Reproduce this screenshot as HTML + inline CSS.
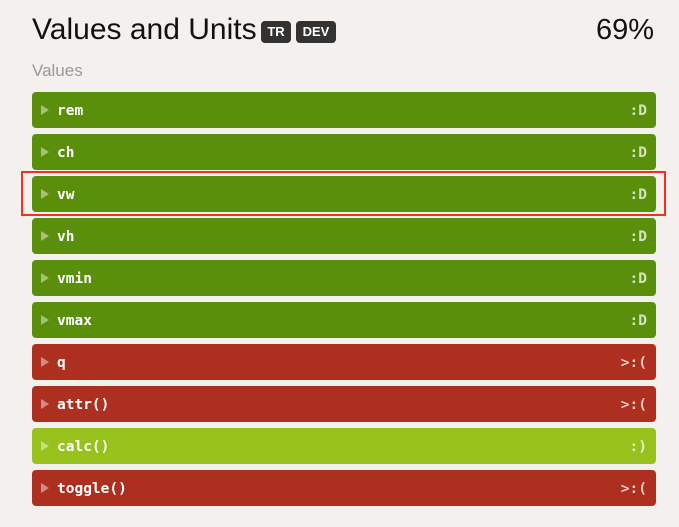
<!DOCTYPE html>
<html><head><style>
body{margin:0;width:679px;height:527px;background:#f3f0ed;font-family:"Liberation Sans",sans-serif;position:relative;overflow:hidden}
h1{position:absolute;left:32px;top:11px;margin:0;font-weight:normal;font-size:30px;color:#111;line-height:38px}
.b{position:absolute;top:21px;height:22px;background:#333;color:#fff;font-weight:bold;font-size:13px;line-height:22px;text-align:center;border-radius:4px}
.pct{position:absolute;right:25px;top:11px;font-size:29px;line-height:38px;color:#111}
.sub{position:absolute;left:32px;top:61px;font-size:17px;color:#999}
.r{position:absolute;left:32px;width:624px;height:36px;border-radius:4px;color:#fff;font-family:"DejaVu Sans Mono",monospace;font-weight:bold;font-size:14.5px}
.r span{line-height:36px;top:1px}
.r .t{position:absolute;left:9px;top:13px;width:0;height:0;border-left:8px solid rgba(255,255,255,.45);border-top:5px solid transparent;border-bottom:5px solid transparent}
.r .n{position:absolute;left:25px}
.r .s{position:absolute;right:9px;color:rgba(255,255,255,.75)}
.g{background:#5a8f0c}.x{background:#ad2f1f}.l{background:#97c11b}
.box{position:absolute;left:21px;top:171px;width:641px;height:41px;border:2px solid #f5301c}
</style></head><body>
<h1>Values and Units</h1>
<div class="b" style="left:261px;width:30px">TR</div>
<div class="b" style="left:296px;width:40px">DEV</div>
<div class="pct">69%</div>
<div class="sub">Values</div>
<div class="r g" style="top:92px"><i class="t"></i><span class="n">rem</span><span class="s">:D</span></div>
<div class="r g" style="top:134px"><i class="t"></i><span class="n">ch</span><span class="s">:D</span></div>
<div class="r g" style="top:176px"><i class="t"></i><span class="n">vw</span><span class="s">:D</span></div>
<div class="r g" style="top:218px"><i class="t"></i><span class="n">vh</span><span class="s">:D</span></div>
<div class="r g" style="top:260px"><i class="t"></i><span class="n">vmin</span><span class="s">:D</span></div>
<div class="r g" style="top:302px"><i class="t"></i><span class="n">vmax</span><span class="s">:D</span></div>
<div class="r x" style="top:344px"><i class="t"></i><span class="n">q</span><span class="s">&gt;:(</span></div>
<div class="r x" style="top:386px"><i class="t"></i><span class="n">attr()</span><span class="s">&gt;:(</span></div>
<div class="r l" style="top:428px"><i class="t"></i><span class="n">calc()</span><span class="s">:)</span></div>
<div class="r x" style="top:470px"><i class="t"></i><span class="n">toggle()</span><span class="s">&gt;:(</span></div>
<div class="box"></div>
</body></html>
